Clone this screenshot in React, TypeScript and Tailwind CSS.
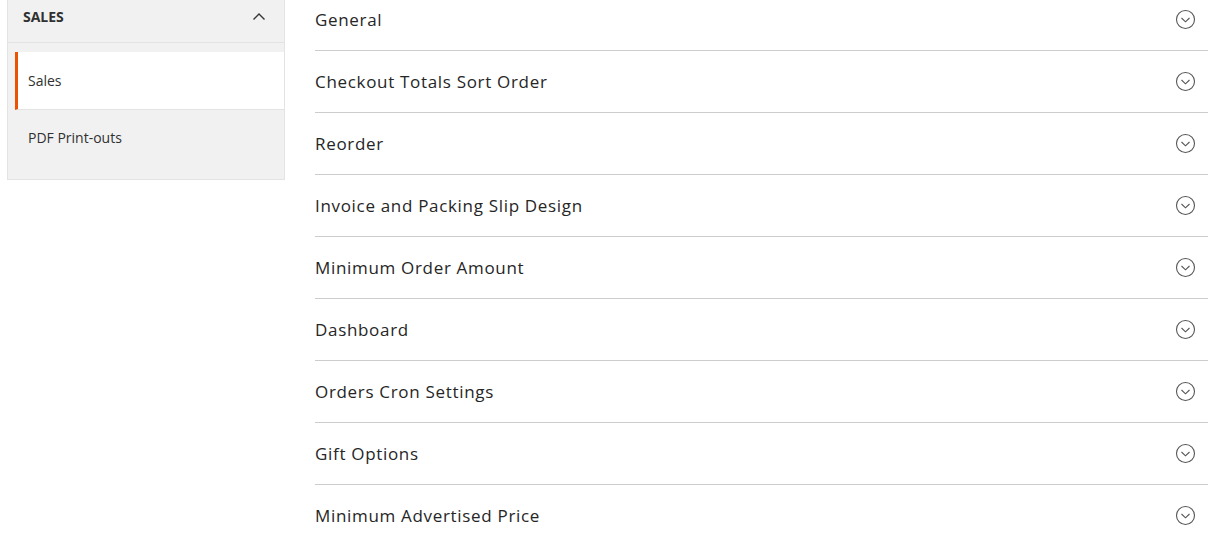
const sections = [
  'General',
  'Checkout Totals Sort Order',
  'Reorder',
  'Invoice and Packing Slip Design',
  'Minimum Order Amount',
  'Dashboard',
  'Orders Cron Settings',
  'Gift Options',
  'Minimum Advertised Price',
]

const CircleChevron = () => (
  <svg width="21" height="21" viewBox="0 0 21 21" fill="none">
    <circle cx="10.5" cy="10.5" r="9" stroke="#555" strokeWidth="1.1" />
    <path d="M6.5 9 L10.5 12.8 L14.5 9" stroke="#555" strokeWidth="1.1" />
  </svg>
)

const App = () => {
  return (
    <div
      className="min-h-screen bg-white flex overflow-hidden"
      style={{ fontFamily: '"Open Sans", "Noto Sans", sans-serif' }}
    >
      <div className="w-[278px] ml-[7px] shrink-0 self-start bg-[#f1f1f1] border border-t-0 border-[#e3e3e3]">
        <div className="h-[43px] flex items-center justify-between pl-[15px] pr-[18px] pb-[10px] border-b border-[#e3e3e3]">
          <span className="text-[14px] font-bold text-[#303030] uppercase">Sales</span>
          <svg width="14" height="9" viewBox="0 0 14 9" fill="none">
            <path d="M1.5 7.5 L7 2 L12.5 7.5" stroke="#333" strokeWidth="1.4" />
          </svg>
        </div>
        <div className="pt-[9px] pl-[7px]">
          <div className="h-[58px] bg-white border-l-[3px] border-[#eb5202] border-b border-b-[#e3e3e3] flex items-center pl-[10px] text-[14px] text-[#303030]">
            Sales
          </div>
          <div className="h-[69px] pl-[13px] pt-[17px] text-[14px] text-[#303030]">
            PDF Print-outs
          </div>
        </div>
      </div>
      <div className="flex-1 ml-[30px] mr-[7px] -mt-[11px]">
        {sections.map((title) => (
          <div
            key={title}
            className="h-[62px] flex items-center justify-between border-b border-[#cccccc] pr-[12px]"
          >
            <span className="text-[17px] font-medium tracking-[0.04em] text-[#262626]">
              {title}
            </span>
            <CircleChevron />
          </div>
        ))}
      </div>
    </div>
  )
}

export default App
